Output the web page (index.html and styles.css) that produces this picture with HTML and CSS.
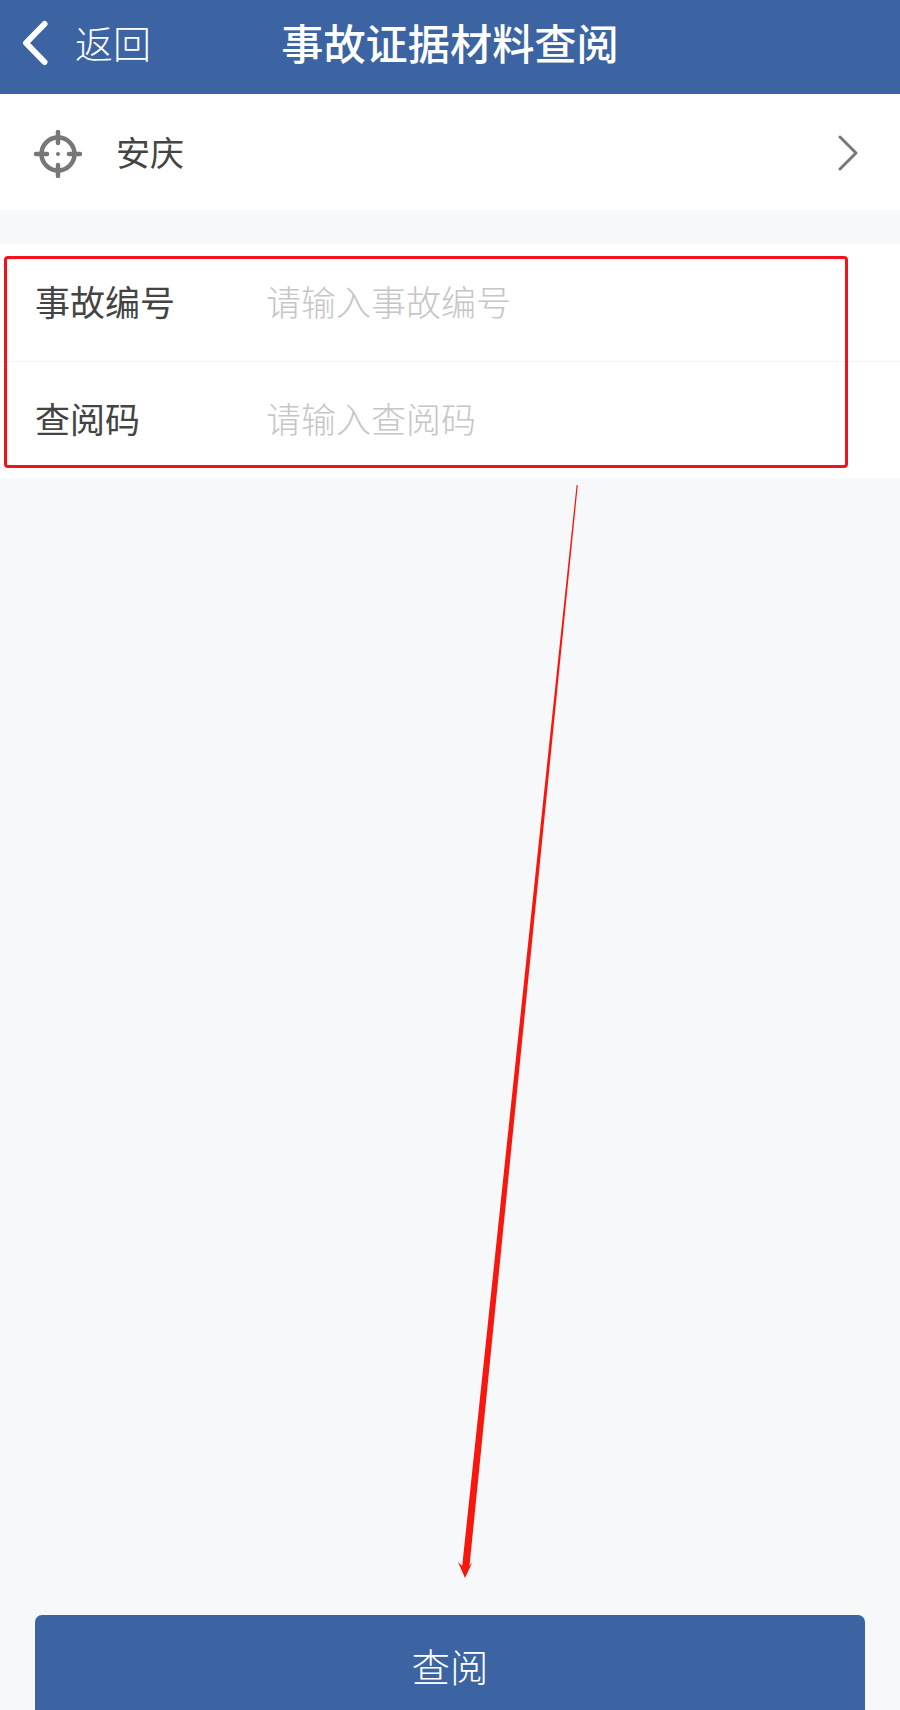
FILE: index.html
```html
<!DOCTYPE html>
<html lang="zh-CN">
<head>
<meta charset="utf-8">
<title>事故证据材料查阅</title>
<link rel="stylesheet" href="styles.css">
</head>
<body>
<div class="page">
  <header class="topbar">
    <div class="back">
      <svg class="back-icon" viewBox="0 0 28 46" aria-hidden="true"><path d="M23.5 4 L5 23 L23.5 42"/></svg>
      <span class="back-label">返回</span>
    </div>
    <h1 class="title">事故证据材料查阅</h1>
    <div class="topbar-spacer"></div>
  </header>

  <section class="city-row">
    <svg class="locate-icon" viewBox="0 0 48 48" aria-hidden="true">
      <circle class="ring" cx="24" cy="24" r="16.5"/>
      <path class="ticks" d="M24 2 V13 M24 35 V46 M2 24 H13 M35 24 H46"/>
      <circle class="dot" cx="24" cy="24" r="2"/>
    </svg>
    <span class="city-name">安庆</span>
    <svg class="chevron" viewBox="0 0 22 38" aria-hidden="true"><path d="M3 4 L19 20 L3 36"/></svg>
  </section>

  <section class="form">
    <div class="field">
      <span class="field-label">事故编号</span>
      <span class="field-hint">请输入事故编号</span>
    </div>
    <div class="field">
      <span class="field-label">查阅码</span>
      <span class="field-hint">请输入查阅码</span>
    </div>
  </section>

  <button class="submit" type="button">查阅</button>

  <div class="note-box"></div>
  <svg class="note-arrow" viewBox="0 0 900 1710" aria-hidden="true">
    <polygon points="576.6,485 577.8,485 469.5,1566 472.5,1562 465,1578 458,1562 462.2,1566"/>
  </svg>
</div>
</body>
</html>
```

FILE: styles.css
```css
* { box-sizing: border-box; }

html, body {
  margin: 0;
  padding: 0;
}

body {
  font-family: "Noto Sans CJK SC", "Noto Sans", sans-serif;
  background: #f7f8fa;
}

.page {
  position: relative;
  width: 900px;
  height: 1710px;
  overflow: hidden;
  display: flex;
  flex-direction: column;
  background: #f7f8fa;
}

.topbar {
  height: 94px;
  flex: none;
  background: #3c64a2;
  color: #fff;
  display: grid;
  grid-template-columns: 1fr auto 1fr;
  align-items: center;
  padding-bottom: 8px;
}

.back {
  display: flex;
  align-items: center;
  padding-left: 21px;
  gap: 26px;
}

.back-icon {
  width: 28px;
  height: 46px;
  flex: none;
}

.back-icon path {
  fill: none;
  stroke: #fff;
  stroke-width: 6;
  stroke-linecap: round;
  stroke-linejoin: round;
}

.back-label {
  font-size: 38px;
  line-height: 46px;
  font-weight: 300;
  padding-bottom: 2px;
}

.title {
  margin: 0;
  padding-bottom: 3px;
  font-size: 42.2px;
  line-height: 50px;
  font-weight: 500;
}

.city-row {
  height: 116px;
  flex: none;
  background: #fff;
  display: flex;
  align-items: center;
  padding: 0 41px 0 34px;
}

.locate-icon {
  width: 48px;
  height: 48px;
  flex: none;
  margin-top: 3px;
}

.locate-icon .ring,
.locate-icon .ticks {
  fill: none;
  stroke: #777;
  stroke-width: 4.5;
  stroke-linecap: round;
}

.locate-icon .dot {
  fill: #777;
}

.city-name {
  margin-left: 34px;
  font-size: 34px;
  line-height: 46px;
  color: #444;
  font-weight: 400;
}

.chevron {
  margin-left: auto;
  width: 22px;
  height: 38px;
  flex: none;
}

.chevron path {
  fill: none;
  stroke: #777;
  stroke-width: 3;
  stroke-linecap: round;
  stroke-linejoin: round;
}

.form {
  margin-top: 34px;
  flex: none;
  background: #fff;
}

.field {
  height: 117px;
  display: flex;
  align-items: center;
  padding-left: 35px;
  padding-bottom: 4px;
}

.field + .field {
  border-top: 1px solid #f2f3f5;
}

.field-label {
  width: 231px;
  flex: none;
  font-size: 35px;
  line-height: 46px;
  color: #444;
}

.field-hint {
  font-size: 35px;
  line-height: 46px;
  color: #c6c6c6;
  font-weight: 300;
}

.submit {
  margin: auto 35px 0;
  height: 95px;
  flex: none;
  border: 0;
  padding: 5px 0 0;
  border-radius: 7px 7px 0 0;
  background: #3c64a2;
  color: #fff;
  font-family: inherit;
  font-size: 38.5px;
  font-weight: 300;
}

.note-box {
  position: absolute;
  left: 4px;
  top: 256px;
  width: 844px;
  height: 212px;
  border: 3px solid #f4121a;
  border-radius: 4px;
}

.note-arrow {
  position: absolute;
  inset: 0;
  width: 900px;
  height: 1710px;
  pointer-events: none;
}

.note-arrow polygon {
  fill: #f8170f;
}
```
